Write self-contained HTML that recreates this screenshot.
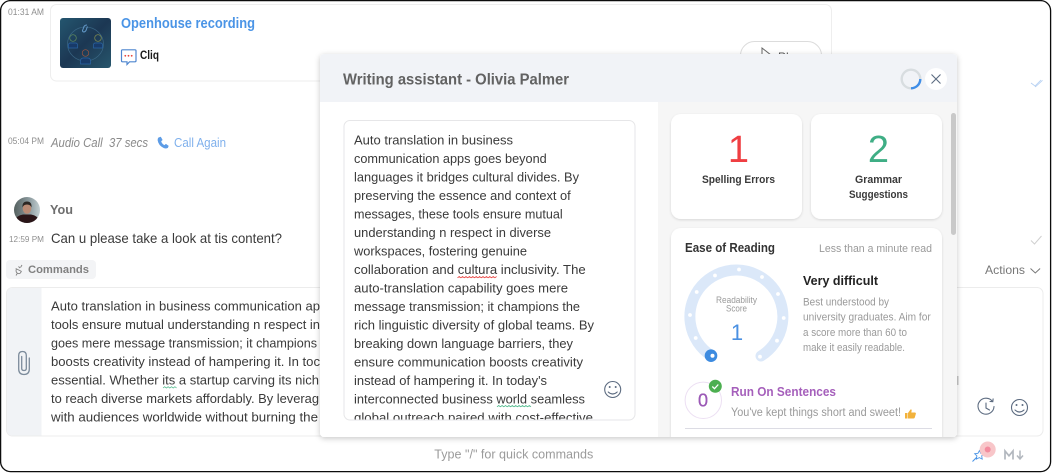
<!DOCTYPE html>
<html lang="en">
<head>
<meta charset="utf-8">
<title>Writing assistant</title>
<style>
html,body{margin:0;padding:0;background:#fff;width:1053px;height:473px;overflow:hidden}
svg{display:block}
text{font-family:"Liberation Sans",sans-serif;white-space:pre}
.b{font-size:13px;fill:#3a3a3a}
.d{font-size:11px;fill:#9a9a9a}
.ts{font-size:9px;fill:#8f8f8f}
</style>
</head>
<body>
<svg width="1053" height="473" viewBox="0 0 1053 473" xmlns="http://www.w3.org/2000/svg">
<defs>
<filter id="sh" x="-5%" y="-5%" width="110%" height="112%"><feDropShadow dx="0" dy="1.5" stdDeviation="3" flood-color="#000" flood-opacity=".22"/></filter>
<filter id="cs" x="-10%" y="-10%" width="120%" height="120%"><feDropShadow dx="0" dy="1" stdDeviation="1.2" flood-color="#000" flood-opacity=".13"/></filter>
<clipPath id="boxc"><rect x="345" y="121" width="289" height="298.5"/></clipPath>
<clipPath id="pan"><rect x="320" y="54" width="637" height="383" rx="4"/></clipPath>
<clipPath id="av"><circle cx="27" cy="210" r="13"/></clipPath>
<clipPath id="playc"><rect x="730" y="30" width="100" height="24"/></clipPath>
<linearGradient id="th" x1="0" y1="0" x2="1" y2="1"><stop offset="0" stop-color="#24566f"/><stop offset=".5" stop-color="#1c3753"/><stop offset="1" stop-color="#27566c"/></linearGradient>
<linearGradient id="avb" x1="0" y1="0" x2="1" y2="0"><stop offset="0" stop-color="#55605f"/><stop offset=".6" stop-color="#8d9ca0"/><stop offset="1" stop-color="#c3cfd2"/></linearGradient>
</defs>

<rect x="0" y="0" width="1053" height="473" fill="#fff"/>
<rect x=".6" y=".6" width="1050" height="471" rx="10" fill="#fff" stroke="#0c0c0c" stroke-width="1.300"/>

<!-- first message -->
<text class="ts" x="8" y="15" textLength="36" lengthAdjust="spacingAndGlyphs">01:31 AM</text>
<rect x="50.500" y="4.500" width="781" height="76.500" rx="6" fill="#fff" stroke="#eeeeee"/>
<rect x="60" y="18" width="51" height="50" rx="3" fill="url(#th)"/>
<g fill="none" stroke-width=".7" opacity=".85">
<ellipse cx="85.500" cy="44" rx="18" ry="17" stroke="#3f6d8c"/>
<circle cx="73" cy="38" r="3.300" stroke="#6d9a5e"/>
<path d="M68.500 48v-3q0-2 2-2h5q2 0 2 2v3z" fill="#173a6c" stroke="#2d6cb2"/>
<circle cx="98" cy="38" r="3.300" stroke="#98a050"/>
<path d="M93.500 48v-3q0-2 2-2h5q2 0 2 2v3z" fill="#173a6c" stroke="#2d6cb2"/>
<circle cx="85.500" cy="53" r="3.300" stroke="#b55a3c"/>
<path d="M80.500 64v-3q0-3 3-3h4q3 0 3 3v3z" fill="#173a6c" stroke="#2d6cb2"/>
<path d="M87 25q-3 0-3.500 3l-1 2.500q0 1.500 1.500 1.500 2-.5 2.500-3l1-2.500" stroke="#6fa8dc" stroke-width="1"/>
</g>
<text x="121" y="28" font-size="14.500" font-weight="bold" fill="#4a94e6" textLength="134" lengthAdjust="spacingAndGlyphs">Openhouse recording</text>
<path d="M122.500 49.800h12.500q1 0 1 1v10q0 1-1 1h-5.500l-2.500 2.700v-2.700h-4.500q-1 0-1-1v-10q0-1 1-1z" fill="#fff" stroke="#4f86cf" stroke-width="1.200"/>
<g fill="#e8443a"><circle cx="125.300" cy="55.800" r=".9"/><circle cx="128.500" cy="55.800" r=".9"/><circle cx="131.700" cy="55.800" r=".9"/></g>
<text x="140" y="59" font-size="11.500" font-weight="bold" fill="#1a1a1a" textLength="19" lengthAdjust="spacingAndGlyphs">Cliq</text>
<g clip-path="url(#playc)">
<rect x="740.500" y="41.500" width="81" height="28" rx="14" fill="#fff" stroke="#dcdcdc"/>
<path d="M762 48l9 7-9 7z" fill="none" stroke="#666" stroke-width="1"/>
<text x="778" y="61" font-size="12" fill="#555">Play</text>
</g>
<path d="M1031 83l4 3 6-6M1035 86.500l.5.300 7-6.500" fill="none" stroke="#b4cff2" stroke-width=".8"/>

<!-- call -->
<text class="ts" x="8" y="144" textLength="36" lengthAdjust="spacingAndGlyphs">05:04 PM</text>
<text x="51" y="147" font-size="12.500" font-style="italic" fill="#8a8a8a" textLength="97" lengthAdjust="spacingAndGlyphs">Audio Call  37 secs</text>
<path d="M158.500 137.500l2.300-.8 1.800 3.300-1.400 1.300q.6 2.500 3.200 3.800l1.500-1.200 2.800 2-.8 2q-1.500 1-4 .2-5.500-2.500-6.300-8 0-1.800.9-2.600z" fill="#5d9ce6"/>
<text x="174" y="147" font-size="12.500" fill="#7fb0ec" textLength="52" lengthAdjust="spacingAndGlyphs">Call Again</text>

<!-- you -->
<g clip-path="url(#av)">
<rect x="14" y="197" width="26" height="26" fill="url(#avb)"/>
<path d="M14 223.500v-3q3-5 9-6h8q6 1 9 6v3z" fill="#2a1518"/>
<ellipse cx="27" cy="208.500" rx="4.300" ry="5.300" fill="#b98a74"/>
<path d="M22.500 207.500q-.5-6 4.500-6 5 0 4.500 6-1-3-4.500-3t-4.500 3z" fill="#2b2623"/>
</g>
<text x="50" y="214" font-size="12.500" font-weight="bold" fill="#6e6e6e" textLength="23" lengthAdjust="spacingAndGlyphs">You</text>
<text x="9" y="242" font-size="8.500" fill="#8f8f8f" textLength="35" lengthAdjust="spacingAndGlyphs">12:59 PM</text>
<text x="51" y="243" font-size="14" fill="#3a3a3a" textLength="231" lengthAdjust="spacingAndGlyphs">Can u please take a look at tis content?</text>
<path d="M1031 240.500l3.500 3.500 7-8" fill="none" stroke="#d0d0d0" stroke-width="1"/>

<rect x="6" y="260" width="90" height="19" rx="4" fill="#f3f4f6"/>
<path d="M16 275.500l1.500-2.500M22 265l-1.500 2.500M15.700 268.500l6 3M16.300 269q-1 3.500 1.700 4.500 2.500.7 3.300-2.200M18.500 266.500l1.500 1.500" fill="none" stroke="#808080" stroke-width=".9"/>
<text x="28" y="273" font-size="11" font-weight="bold" fill="#808080" textLength="61" lengthAdjust="spacingAndGlyphs">Commands</text>

<text x="985" y="274" font-size="12" fill="#777" textLength="40" lengthAdjust="spacingAndGlyphs">Actions</text>
<path d="M1030.500 268.500l4.800 4.500 4.800-4.500" fill="none" stroke="#777" stroke-width="1"/>

<!-- composer -->
<rect x="6.500" y="287.500" width="1036.500" height="148.500" rx="6" fill="#fff" stroke="#ececec"/>
<path d="M7 293.500q0-5.500 5.500-5.500H41.500v147.500H12.500q-5.500 0-5.500-5.500z" fill="#f1f3f6"/>
<path d="M29.300 358v11q0 5.500-5.300 5.500t-5.300-5.500v-13.500q0-4 3.800-4t3.800 4v13q0 2-2.300 2t-2.300-2v-12" fill="none" stroke="#7c8b9b" stroke-width="1.300" stroke-linecap="round"/>
<text class="b" x="51" y="310.500" textLength="269" lengthAdjust="spacingAndGlyphs">Auto translation in business communication ap</text>
<text class="b" x="51" y="329" textLength="269" lengthAdjust="spacingAndGlyphs">tools ensure mutual understanding n respect in</text>
<text class="b" x="51" y="347.500" textLength="266" lengthAdjust="spacingAndGlyphs">goes mere message transmission; it champions</text>
<text class="b" x="51" y="366" textLength="269" lengthAdjust="spacingAndGlyphs">boosts creativity instead of hampering it. In toc</text>
<text class="b" x="51" y="384.500" textLength="268" lengthAdjust="spacingAndGlyphs">essential. Whether its a startup carving its nich</text>
<text class="b" x="51" y="403" textLength="268" lengthAdjust="spacingAndGlyphs">to reach diverse markets affordably. By leverag</text>
<text class="b" x="51" y="421.500" textLength="267" lengthAdjust="spacingAndGlyphs">with audiences worldwide without burning the</text>
<path d="M163 388l1.700-1.300 1.700 1.300 1.700-1.300 1.700 1.300 1.700-1.300 1.700 1.300 1.700-1.300 1.700 1.300" fill="none" stroke="#4db88a" stroke-width=".7"/>

<!-- composer right icons -->
<g fill="none" stroke="#5c6b80" stroke-width="1.100" stroke-linecap="round">
<path d="M992.500 401.500a8 8 0 1 0 1.500 5M990 401.500l2.800.2.300-2.800M986 403v5l3.500 2"/>
<circle cx="1019.500" cy="407.500" r="8"/>
<path d="M1015 410q4.500 4 9 0"/>
</g>
<circle cx="1016.500" cy="405" r="1" fill="#5c6b80"/><circle cx="1022.500" cy="405" r="1" fill="#5c6b80"/>

<!-- bottom bar -->
<text x="434.300" y="458.500" font-size="12.500" fill="#9b9b9b" textLength="159" lengthAdjust="spacingAndGlyphs">Type "/" for quick commands</text>
<path d="M972.500 461.500l5-5" stroke="#4a94e6" stroke-width="1.100" fill="none"/>
<path d="M979.500 450.500l1.200 2.800 3.200.4-2.200 2.200.5 3.200-2.900-1.500-2.900 1.500.5-3.200-2.200-2.200 3.200-.4z" fill="#fff" stroke="#4a94e6" stroke-width=".9"/>
<circle cx="987.700" cy="449.500" r="8" fill="#f8c6c9"/>
<circle cx="987.700" cy="449.500" r="3" fill="#f38b9e"/>
<path d="M1005 459.500v-8.500l4 4.800 4-4.800v8.500" fill="none" stroke="#b2b7be" stroke-width="1.700"/>
<path d="M1020 450.500v8M1017 455.500l3 3.500 3-3.500" fill="none" stroke="#b2b7be" stroke-width="1.500"/>

<rect x="957" y="376" width="1.500" height="9" fill="#c8c8c8"/>

<!-- Panel -->
<rect x="320" y="54" width="637" height="383" rx="4" fill="#fff" filter="url(#sh)"/>
<g clip-path="url(#pan)">
<rect x="320" y="54" width="637" height="48" fill="#f1f3f7"/>
<rect x="658" y="102" width="299" height="335" fill="#f6f6f6"/>
<text x="343" y="84.500" font-size="16" font-weight="bold" fill="#626262" textLength="226" lengthAdjust="spacingAndGlyphs">Writing assistant - Olivia Palmer</text>
<circle cx="911" cy="79" r="9.300" fill="none" stroke="#d8dde0" stroke-width="2.400"/>
<path d="M920.300 79a9.300 9.300 0 0 1-9.300 9.300" fill="none" stroke="#3f8ee8" stroke-width="2.400"/>
<circle cx="936" cy="79" r="11" fill="#fff"/>
<path d="M931.500 74.500l9 9M940.500 74.500l-9 9" stroke="#5c6b80" stroke-width="1.100" fill="none"/>

<!-- text box -->
<rect x="344" y="120.500" width="291" height="299.500" rx="6" fill="#fff" stroke="#e6e6e8"/>
<g clip-path="url(#boxc)">
<text class="b" x="354" y="144.500" textLength="159" lengthAdjust="spacingAndGlyphs">Auto translation in business</text>
<text class="b" x="354" y="163" textLength="192.700" lengthAdjust="spacingAndGlyphs">communication apps goes beyond</text>
<text class="b" x="354" y="181.500" textLength="225" lengthAdjust="spacingAndGlyphs">languages it bridges cultural divides. By</text>
<text class="b" x="354" y="200" textLength="216.700" lengthAdjust="spacingAndGlyphs">preserving the essence and context of</text>
<text class="b" x="354" y="218.500" textLength="208.700" lengthAdjust="spacingAndGlyphs">messages, these tools ensure mutual</text>
<text class="b" x="354" y="237" textLength="197" lengthAdjust="spacingAndGlyphs">understanding n respect in diverse</text>
<text class="b" x="354" y="255.500" textLength="173" lengthAdjust="spacingAndGlyphs">workspaces, fostering genuine</text>
<text class="b" x="354" y="274" textLength="231.700" lengthAdjust="spacingAndGlyphs">collaboration and cultura inclusivity. The</text>
<text class="b" x="354" y="292.500" textLength="214" lengthAdjust="spacingAndGlyphs">auto-translation capability goes mere</text>
<text class="b" x="354" y="311" textLength="226" lengthAdjust="spacingAndGlyphs">message transmission; it champions the</text>
<text class="b" x="354" y="329.500" textLength="240" lengthAdjust="spacingAndGlyphs">rich linguistic diversity of global teams. By</text>
<text class="b" x="354" y="348" textLength="219" lengthAdjust="spacingAndGlyphs">breaking down language barriers, they</text>
<text class="b" x="354" y="366.500" textLength="229" lengthAdjust="spacingAndGlyphs">ensure communication boosts creativity</text>
<text class="b" x="354" y="385" textLength="193" lengthAdjust="spacingAndGlyphs">instead of hampering it. In today's</text>
<text class="b" x="354" y="403.500" textLength="231" lengthAdjust="spacingAndGlyphs">interconnected business world seamless</text>
<text class="b" x="354" y="422" textLength="239" lengthAdjust="spacingAndGlyphs">global outreach paired with cost-effective</text>
</g>
<path d="M457.500 277.800l1.700-1.300 1.700 1.300 1.700-1.300 1.700 1.300 1.700-1.300 1.700 1.300 1.700-1.300 1.700 1.300 1.700-1.300 1.700 1.300 1.700-1.300 1.700 1.300 1.700-1.300 1.700 1.300 1.700-1.300 1.700 1.300 1.700-1.300 1.700 1.300 1.700-1.300 1.700 1.300 1.700-1.300 1.700 1.300 1.700-1.300" fill="none" stroke="#e8423f" stroke-width=".8"/>
<path d="M497 406.800l1.700-1.300 1.700 1.300 1.700-1.300 1.700 1.300 1.700-1.300 1.700 1.300 1.700-1.300 1.700 1.300 1.700-1.300 1.700 1.300 1.700-1.300 1.700 1.300 1.700-1.300 1.700 1.300 1.700-1.300 1.700 1.300 1.700-1.300 1.700 1.300 1.700-1.300 1.700 1.300" fill="none" stroke="#4db88a" stroke-width=".8"/>
<circle cx="612.700" cy="389.500" r="8" fill="#fff" stroke="#5c6b80" stroke-width="1.100"/>
<circle cx="609.700" cy="387" r="1" fill="#5c6b80"/><circle cx="615.700" cy="387" r="1" fill="#5c6b80"/>
<path d="M608.200 392q4.500 4 9 0" fill="none" stroke="#5c6b80" stroke-width="1.100" stroke-linecap="round"/>

<!-- scrollbar -->
<rect x="951" y="113" width="5" height="122" rx="2.500" fill="#c9c9c9"/>

<!-- stat cards -->
<rect x="671" y="114" width="131" height="105" rx="10" fill="#fff" filter="url(#cs)"/>
<rect x="811" y="114" width="131" height="105" rx="10" fill="#fff" filter="url(#cs)"/>
<text x="738.500" y="162" font-size="38" fill="#ef3e42" text-anchor="middle">1</text>
<text x="878.500" y="162" font-size="38" fill="#3fae85" text-anchor="middle">2</text>
<text x="702" y="183" font-size="11" font-weight="bold" fill="#3a3a3a" textLength="73" lengthAdjust="spacingAndGlyphs">Spelling Errors</text>
<text x="855" y="183" font-size="11" font-weight="bold" fill="#3a3a3a" textLength="47" lengthAdjust="spacingAndGlyphs">Grammar</text>
<text x="849" y="198" font-size="11" font-weight="bold" fill="#3a3a3a" textLength="59" lengthAdjust="spacingAndGlyphs">Suggestions</text>

<!-- ease card -->
<rect x="671" y="228" width="271" height="230" rx="10" fill="#fff" filter="url(#cs)"/>
<text x="685" y="252" font-size="12.500" font-weight="bold" fill="#333" textLength="90" lengthAdjust="spacingAndGlyphs">Ease of Reading</text>
<text class="d" x="819" y="252" textLength="113" lengthAdjust="spacingAndGlyphs">Less than a minute read</text>

<path d="M711 355.500A46.500 46.500 0 1 1 761 356" fill="none" stroke="#dbe8f9" stroke-width="11" stroke-linecap="round"/>
<g fill="#fff">
<circle cx="739" cy="269.500" r="1.900"/><circle cx="715" cy="275.500" r="1.900"/><circle cx="696.700" cy="292" r="1.900"/><circle cx="690" cy="315" r="1.900"/><circle cx="695.700" cy="338" r="1.900"/><circle cx="762" cy="277" r="1.900"/><circle cx="778" cy="294" r="1.900"/><circle cx="783.700" cy="318" r="1.900"/><circle cx="777" cy="340.700" r="1.900"/><circle cx="760" cy="356.700" r="1.900"/>
</g>
<circle cx="711" cy="355.700" r="6.300" fill="#3d8be0"/>
<circle cx="712.500" cy="355.700" r="2" fill="#fff"/>
<text x="716" y="303" font-size="9.500" fill="#9a9a9a" textLength="41" lengthAdjust="spacingAndGlyphs">Readability</text>
<text x="726" y="311.500" font-size="9.500" fill="#9a9a9a" textLength="21" lengthAdjust="spacingAndGlyphs">Score</text>
<text x="737" y="340" font-size="22" fill="#4a90e2" text-anchor="middle">1</text>

<text x="803" y="285" font-size="13" font-weight="bold" fill="#222" textLength="75" lengthAdjust="spacingAndGlyphs">Very difficult</text>
<text class="d" x="803" y="305.500" textLength="86" lengthAdjust="spacingAndGlyphs">Best understood by</text>
<text class="d" x="803" y="320.500" textLength="127.700" lengthAdjust="spacingAndGlyphs">university graduates. Aim for</text>
<text class="d" x="803" y="336" textLength="104" lengthAdjust="spacingAndGlyphs">a score more than 60 to</text>
<text class="d" x="803" y="351" textLength="102" lengthAdjust="spacingAndGlyphs">make it easily readable.</text>

<circle cx="703.300" cy="400.300" r="18.200" fill="#fff" stroke="#ecdff3"/>
<text x="703" y="406.500" font-size="18" fill="#9b59b6" stroke="#9b59b6" stroke-width=".3" text-anchor="middle">0</text>
<circle cx="715.300" cy="386.300" r="6.500" fill="#4caf50"/>
<path d="M712.300 386.500l2.200 2.200 3.800-4.200" fill="none" stroke="#fff" stroke-width="1.300"/>
<text x="731" y="396" font-size="12.500" font-weight="bold" fill="#a55fbb" textLength="105" lengthAdjust="spacingAndGlyphs">Run On Sentences</text>
<text x="731" y="416" font-size="11.500" fill="#9a9a9a" textLength="170" lengthAdjust="spacingAndGlyphs">You've kept things short and sweet!</text>
<path d="M905 413h2.500v5.500H905zM908 413l2.500-3.500q1.200-.6 1.200 1l-.4 2h3.700q1.200.3.800 1.500l-1 3.500q-.3 1-1.300 1H908z" fill="#f2b23c"/>
<rect x="685" y="428" width="247" height="1" fill="#dcdce4"/>
</g>
</svg>
</body>
</html>
